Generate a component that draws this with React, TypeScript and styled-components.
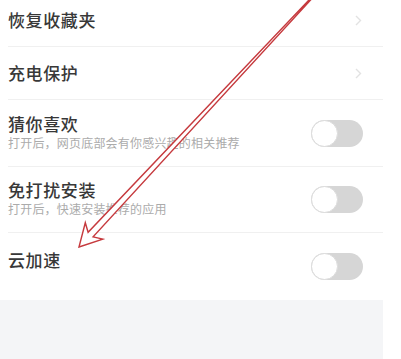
import React from "react";
import styled, { createGlobalStyle } from "styled-components";

const Global = createGlobalStyle`
  html, body { margin: 0; padding: 0; background: #ffffff; }
  body { font-family: "Noto Sans CJK SC", "Noto Sans", sans-serif; overflow: hidden; }
`;

const Page = styled.div`
  position: relative;
  width: 401px;
  height: 359px;
  overflow: hidden;
  background: #ffffff;
`;

const Panel = styled.div`
  width: 383px;
  height: 365px;
  margin-top: -6px;
  background: #f4f5f7;
  display: flex;
  flex-direction: column;
`;

const List = styled.div`
  background: #ffffff;
  padding-left: 8px;
  display: flex;
  flex-direction: column;
`;

const Row = styled.div<{ $h: number; $last?: boolean }>`
  height: ${(p) => p.$h}px;
  box-sizing: border-box;
  display: flex;
  align-items: center;
  justify-content: space-between;
  padding-right: 20px;
  border-bottom: ${(p) => (p.$last ? "none" : "1px solid #f0f0f0")};
`;

const TextBlock = styled.div<{ $lift?: number }>`
  display: flex;
  flex-direction: column;
  margin-bottom: ${(p) => p.$lift ?? 0}px;
`;

const Title = styled.div`
  font-size: 17px;
  line-height: 20px;
  font-weight: 500;
  color: #383838;
  letter-spacing: 0.6px;
`;

const Sub = styled.div`
  font-size: 12px;
  line-height: 16px;
  color: #ababab;
  letter-spacing: 0.2px;
  margin-top: 1px;
`;

const Chevron = styled.svg`
  width: 7px;
  height: 11px;
  margin-right: 1px;
`;

const Track = styled.div`
  width: 52px;
  height: 27px;
  border-radius: 14px;
  background: #d6d6d6;
  display: flex;
  align-items: center;
  box-sizing: border-box;
`;

const Knob = styled.div`
  width: 27px;
  height: 27px;
  border-radius: 50%;
  box-sizing: border-box;
  background: #ffffff;
  border: 1.5px solid #dcdcdc;
`;

const Overlay = styled.svg`
  position: absolute;
  left: 0;
  top: 0;
  width: 401px;
  height: 359px;
  pointer-events: none;
`;

const Arrow = () => (
  <Chevron viewBox="0 0 7 11">
    <path d="M1 1 L5.5 5.5 L1 10" fill="none" stroke="#e2e2e2" strokeWidth="1.4" />
  </Chevron>
);

const Toggle = () => (
  <Track>
    <Knob />
  </Track>
);

type Item = {
  title: string;
  sub?: string;
  kind: "link" | "switch";
  h: number;
  lift?: number;
};

const items: Item[] = [
  { title: "恢复收藏夹", kind: "link", h: 53 },
  { title: "充电保护", kind: "link", h: 53 },
  { title: "猜你喜欢", sub: "打开后，网页底部会有你感兴趣的相关推荐", kind: "switch", h: 67, lift: 2 },
  { title: "免打扰安装", sub: "打开后，快速安装推荐的应用", kind: "switch", h: 66, lift: 2 },
  { title: "云加速", kind: "switch", h: 67, lift: 14 },
];

// annotation arrow geometry
const T = [79, 247];
const d = [-0.683, 0.731];
const n = [0.731, 0.683];
const pt = (back: number, side: number) =>
  `${(T[0] - back * d[0] + side * n[0]).toFixed(1)},${(T[1] - back * d[1] + side * n[1]).toFixed(1)}`;
const arrowPoints = [
  pt(0, 0),
  pt(22, 12),
  pt(17, 3.4),
  pt(350, 0.5),
  pt(350, -0.5),
  pt(17, -3.4),
  pt(22, -12),
].join(" ");

export default function App() {
  return (
    <Page>
      <Global />
      <Panel>
        <List>
          {items.map((it, i) => (
            <Row key={it.title} $h={it.h} $last={i === items.length - 1}>
              <TextBlock $lift={it.lift}>
                <Title>{it.title}</Title>
                {it.sub && <Sub>{it.sub}</Sub>}
              </TextBlock>
              {it.kind === "link" ? <Arrow /> : <Toggle />}
            </Row>
          ))}
        </List>
      </Panel>
      <Overlay viewBox="0 0 401 359">
        <polygon
          points={arrowPoints}
          fill="#ffffff"
          stroke="#c63a3e"
          strokeWidth="1.4"
          strokeLinejoin="miter"
        />
      </Overlay>
    </Page>
  );
}
